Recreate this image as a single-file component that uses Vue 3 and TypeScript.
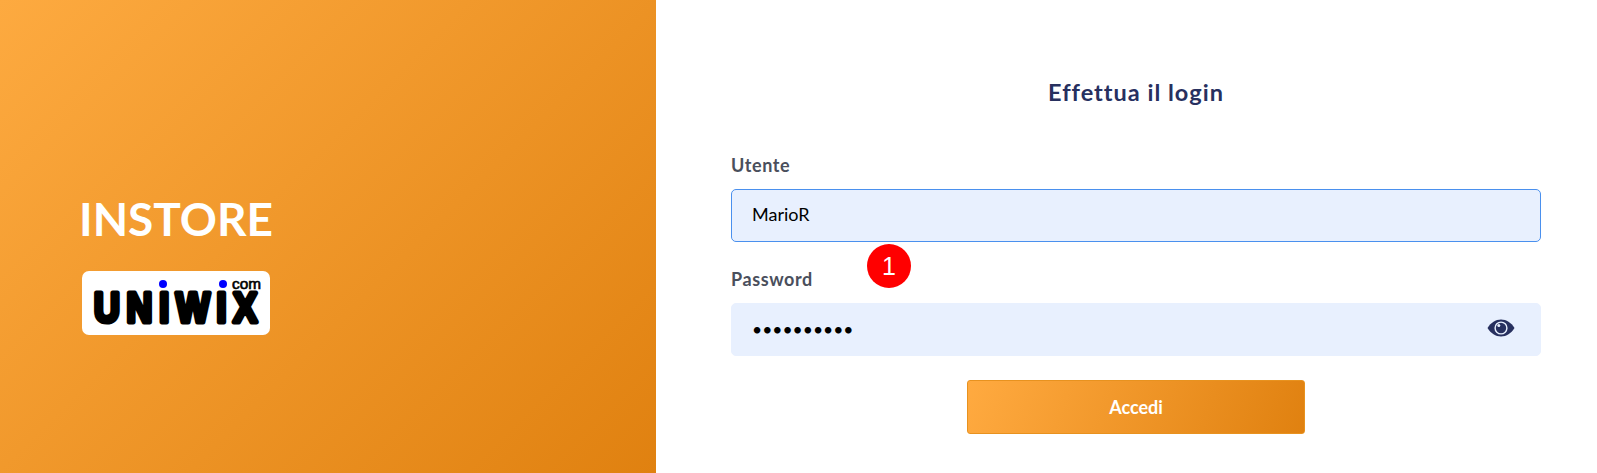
<template>
  <div class="login-page">
    <!-- Brand panel -->
    <section class="brand-panel">
      <h1 class="brand-title">INSTORE</h1>
      <div class="brand-logo">
        <svg width="188" height="64" viewBox="0 0 188 64">
          <circle cx="81" cy="13" r="4" fill="#0000ff" />
          <circle cx="141" cy="13" r="4" fill="#0000ff" />
          <text x="150" y="18" class="logo-com" textLength="29" lengthAdjust="spacingAndGlyphs">com</text>
          <text x="14" y="51" class="logo-word" transform="scale(0.85 1)" textLength="192" lengthAdjust="spacing">UNIWIX</text>
        </svg>
      </div>
    </section>

    <!-- Login form -->
    <section class="form-panel">
      <h2 class="form-title">Effettua il login</h2>

      <label class="field-label">Utente</label>
      <div class="field field-user">
        <input class="field-input focused" type="text" value="MarioR" />
      </div>

      <label class="field-label">Password</label>
      <div class="field">
        <input class="field-input" type="password" value="mario12345" />
        <svg class="eye" width="28" height="18" viewBox="0 0 28 18">
          <path d="M0.5 9C4 3.500 8.500 0.500 14 0.500S24 3.500 27.500 9C24 14.500 19.500 17.500 14 17.500S4 14.500 0.500 9Z" fill="#27305f" />
          <circle cx="14" cy="9" r="6.600" fill="#e8f0fe" />
          <circle cx="14" cy="9" r="5.200" fill="#27305f" />
          <circle cx="11.800" cy="6.600" r="1.500" fill="#e8f0fe" />
        </svg>
      </div>

      <button class="submit-btn" type="button">Accedi</button>

      <div class="step-badge">1</div>
    </section>
  </div>
</template>

<script setup lang="ts">
</script>

<style>
html,
body {
  margin: 0;
  background: #fff;
}
</style>

<style scoped>
.login-page {
  display: flex;
  height: 473px;
  overflow: hidden;
  font-family: Lato, "Liberation Sans", sans-serif;
}

.brand-panel {
  width: 656px;
  box-sizing: border-box;
  padding: 191px 0 0 79px;
  background: linear-gradient(135deg, #fdaa40, #e08110);
}

.brand-title {
  margin: 0 0 24px;
  font-size: 46px;
  line-height: 56px;
  font-weight: 700;
  color: #fff;
}

.brand-logo {
  width: 188px;
  height: 64px;
  margin-left: 3px;
  background: #fff;
  border-radius: 7px;
}

.brand-logo svg {
  display: block;
}

.logo-word {
  font-family: "Liberation Sans", sans-serif;
  font-size: 42px;
  font-weight: 700;
  fill: #000;
  stroke: #000;
  stroke-width: 5px;
  stroke-linejoin: round;
}

.logo-com {
  font-family: "Liberation Sans", sans-serif;
  font-size: 14px;
  font-weight: 400;
  fill: #000;
  stroke: #000;
  stroke-width: 0.600px;
}

.form-panel {
  position: relative;
  flex: 1;
  display: flex;
  flex-direction: column;
  box-sizing: border-box;
  padding: 0 56px 0 75px;
}

.form-title {
  margin: 77px 0 48px;
  text-align: center;
  font-size: 23.500px;
  line-height: 30px;
  font-weight: 700;
  letter-spacing: 1px;
  color: #27305f;
}

.field-label {
  margin-bottom: 14px;
  font-size: 18px;
  line-height: 20px;
  font-weight: 700;
  letter-spacing: 0.6px;
  color: #4a4f5c;
}

.field {
  position: relative;
  height: 53px;
}

.field-user {
  margin-bottom: 27px;
}

.field-input {
  display: block;
  width: 100%;
  height: 100%;
  box-sizing: border-box;
  padding: 0 20px;
  background: #e8f0fe;
  border: 1px solid #e8f0fe;
  border-radius: 5px;
  outline: none;
  font-family: Lato, sans-serif;
  font-size: 17.500px;
  color: #000;
}

.field-input.focused {
  padding-bottom: 3px;
  border-color: #4a90ee;
  font-size: 18px;
}

.eye {
  position: absolute;
  top: 16px;
  right: 26px;
}

.submit-btn {
  align-self: center;
  width: 338px;
  height: 54px;
  margin-top: 24px;
  background: linear-gradient(110deg, #ffaa40, #e08110);
  border: 1px solid #e8921f;
  border-radius: 3px;
  font-family: Lato, sans-serif;
  font-size: 18px;
  font-weight: 700;
  color: #fff;
}

.step-badge {
  position: absolute;
  top: 244px;
  left: 211px;
  width: 44px;
  height: 44px;
  border-radius: 50%;
  background: #ff0000;
  color: #fff;
  font-family: "Liberation Sans", sans-serif;
  font-size: 25px;
  line-height: 44px;
  text-align: center;
}
</style>
